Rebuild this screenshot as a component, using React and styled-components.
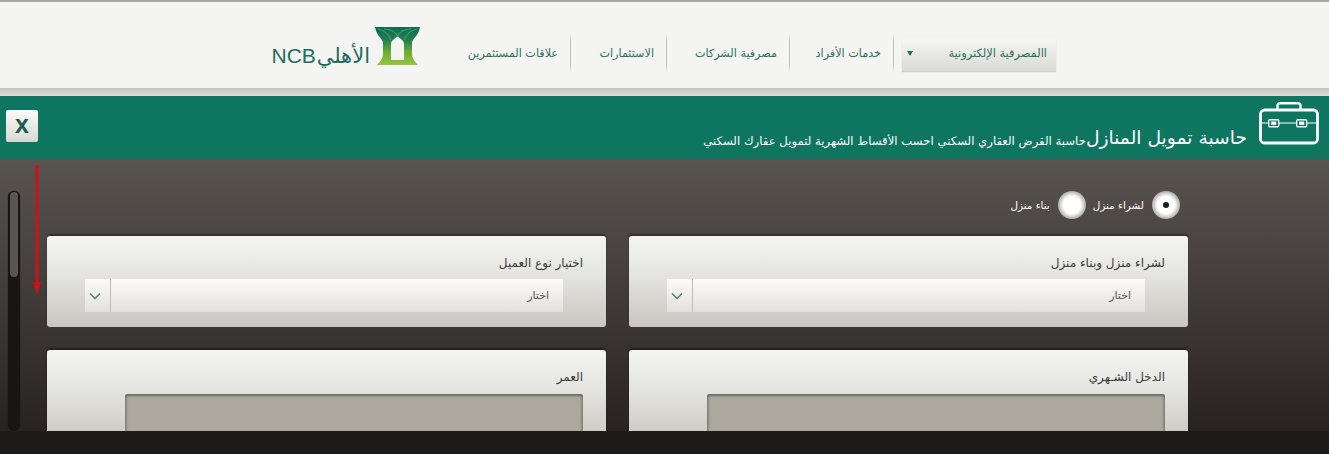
import React from "react";
import styled, { createGlobalStyle } from "styled-components";

const Global = createGlobalStyle`
	html, body {
		margin: 0;
		padding: 0;
		background: #1f1b19;
	}
	* {
		box-sizing: border-box;
	}
	body {
		font-family: "DejaVu Sans", "Liberation Sans", sans-serif;
		overflow: hidden;
	}
`

const Page = styled.div`
	width: 1329px;
	height: 454px;
	overflow: hidden;
	display: flex;
	flex-direction: column;
	background: #1f1b19;
`

const Header = styled.header`
	height: 96px;
	flex: none;
	direction: rtl;
	display: flex;
	align-items: flex-start;
	padding: 36px 273px 0 0;
	background: linear-gradient(#f4f4f3 0, #f4f4f3 86px, #c4c3bd 86px, #dfded9 94px);
	border-top: 2px solid #a5a5a3;
`

const MenuSelect = styled.div`
	width: 154px;
	height: 33px;
	flex: none;
	display: flex;
	align-items: center;
	justify-content: space-between;
	padding: 0 9px 3px 5px;
	background: linear-gradient(#f6f6f4, #d9d9d5);
	box-shadow: 0 1px 1px rgba(0, 0, 0, 0.15);
	font-size: 11.4px;
	color: #2f6f60;
	white-space: nowrap;
`

const Caret = styled.span`
	width: 0;
	height: 0;
	border-left: 3px solid transparent;
	border-right: 3px solid transparent;
	border-top: 5px solid #0e7560;
`

const NavItem = styled.a`
	height: 38px;
	width: ${(p) => p.$w}px;
	margin-top: -4px;
	margin-right: ${(p) => p.$first ? 8 : 0}px;
	flex: none;
	display: flex;
	align-items: center;
	padding-right: 12px;
	font-size: 11.2px;
	color: #2f6f60;
	white-space: nowrap;
	border-right: 1px solid;
	border-image: linear-gradient(transparent, #bdbdb9 20%, #bdbdb9 80%, transparent) 1;
`

const Logo = styled.div`
	width: 148px;
	height: 40px;
	margin-top: -12px;
	margin-right: 36px;
	flex: none;
	display: flex;
	align-items: flex-end;
	gap: 5px;
`

const LogoText = styled.span`
	font-family: "Liberation Sans", "DejaVu Sans", sans-serif;
	font-size: 21px;
	line-height: 20px;
	word-spacing: -5px;
	color: #1c6d5c;
	white-space: nowrap;
`

const Banner = styled.section`
	height: 63px;
	flex: none;
	direction: rtl;
	display: flex;
	align-items: center;
	padding: 0 10px 0 6px;
	background: #0e7560;
	color: #fff;
`

const BannerIcon = styled.svg`
	width: 60px;
	height: 44px;
	flex: none;
	margin-top: -7px;
`

const BannerTitle = styled.h1`
	margin: 20px 12px 0 0;
	font-size: 18.7px;
	line-height: 28px;
	font-weight: normal;
	white-space: nowrap;
`

const BannerSub = styled.span`
	margin-top: 26px;
	font-size: 11.7px;
	line-height: 20px;
	white-space: nowrap;
`

const CloseButton = styled.button`
	margin-right: auto;
	margin-top: -4px;
	width: 32px;
	height: 32px;
	border: none;
	border-radius: 2px;
	padding: 0 0 4px;
	background: linear-gradient(#fbfbf9, #d8d8d3);
	color: #1a5c50;
	font-family: "Liberation Sans", sans-serif;
	font-size: 25px;
	font-weight: bold;
`

const Body = styled.main`
	position: relative;
	height: 272px;
	flex: none;
	overflow: hidden;
	display: flex;
	background: linear-gradient(#5a5451, #282321);
`

const Rail = styled.div`
	width: 47px;
	flex: none;
	padding: 32px 0 0 8px;
`

const Track = styled.div`
	width: 12px;
	height: 240px;
	border-radius: 6px;
	background: #191513;
	box-shadow: 0 0 1px #111;
	padding: 1px 2px;
`

const Thumb = styled.div`
	width: 8px;
	height: 85px;
	border-radius: 4px;
	background: #595654;
`

const RedArrow = styled.svg`
	position: absolute;
	left: 31px;
	top: 6px;
	width: 12px;
	height: 132px;
`

const Content = styled.div`
	width: 1141px;
	flex: none;
	direction: rtl;
`

const RadioRow = styled.div`
	height: 77px;
	padding: 32px 8px 0 0;
	display: flex;
	align-items: flex-start;
	gap: 7px;
`

const RadioOption = styled.label`
	display: flex;
	align-items: center;
	gap: 8px;
	height: 28px;
	font-size: 10.4px;
	color: #fff;
	white-space: nowrap;
`

const RadioDot = styled.span`
	width: 28px;
	height: 28px;
	border-radius: 50%;
	background: radial-gradient(circle closest-side, #fff 62%, #aeada9 100%);
	display: flex;
	align-items: center;
	justify-content: center;
	&::after {
		content: "";
		width: 6px;
		height: 6px;
		border-radius: 50%;
		background: ${(p) => p.$checked ? "#1b1b1b" : "transparent"};
	}
`

const Panels = styled.div`
	display: grid;
	grid-template-columns: 559px 559px;
	column-gap: 23px;
	row-gap: 23px;
`

const Panel = styled.div`
	height: 91px;
	border-radius: 3px;
	padding: 19px 23px 0 0;
	background: linear-gradient(#f4f4f1, #e3e3df 45%, #c9c7c1);
	box-shadow: 0 -2px 2px rgba(0, 0, 0, 0.35);
`

const Label = styled.div`
	font-size: 12px;
	line-height: 16px;
	color: #3a3a3a;
	height: 24px;
`

const Select = styled.div`
	width: 478px;
	height: 33px;
	margin-right: 20px;
	display: flex;
	background: linear-gradient(#fcfbf9, #e1e0dc);
	font-size: 11px;
	color: #555;
`

const SelectValue = styled.div`
	flex: 1;
	display: flex;
	align-items: center;
	padding: 0 14px 0 0;
	border-left: 1px solid #bdbcb7;
`

const SelectArrow = styled.div`
	width: 25px;
	flex: none;
	display: flex;
	align-items: center;
	justify-content: center;
	padding-right: 5px;
`

const Field = styled.div`
	width: 458px;
	height: 60px;
	margin-top: 1px;
	border-radius: 3px;
	background: #aca89e;
	box-shadow: inset 0 2px 2px #6f6c64, inset 2px 0 2px #8d8a82, inset -2px 0 2px #8d8a82;
`

const Chevron = ({ color }) => (
	<svg width="12" height="8" viewBox="0 0 12 8">
		<path d="M1 1.5 L6 6.5 L11 1.5" fill="none" stroke={color} strokeWidth="1.4" />
	</svg>
);

const LogoMark = () => (
	<svg width="45" height="38" viewBox="0 0 45 38" style={{ flex: "none", marginBottom: 1 }}>
		<defs>
			<linearGradient id="arch" x1="0" y1="0" x2="0" y2="1">
				<stop offset="0" stopColor="#0c6b58" />
				<stop offset="0.35" stopColor="#1f8150" />
				<stop offset="0.65" stopColor="#6cab35" />
				<stop offset="1" stopColor="#95c53d" />
			</linearGradient>
		</defs>
		<path
			fillRule="evenodd"
			fill="url(#arch)"
			d="M0 0 H45 L44 4 C42 9 38 12 37 15 V27 C37 31 40 35 43 38 H2 C5 35 8 31 8 27 V15 C7 12 3 9 1 4 Z M16 33 H29 V17 C29 13 25 12 22.5 9 C20 12 16 13 16 17 Z"
		/>
		<path
			d="M3 2 C8 3 13 6 16 13 M42 2 C37 3 32 6 29 13 M9 2 C14 2 20 4 22.5 9 C25 4 31 2 36 2"
			fill="none"
			stroke="#3f9a66"
			strokeWidth="1.2"
		/>
	</svg>
);

const Briefcase = () => (
	<BannerIcon viewBox="0 0 60 44">
		<g fill="none" stroke="#fff">
			<rect x="1.5" y="8" width="57" height="33" rx="4" strokeWidth="2.8" />
			<path d="M18.5 8 V3.5 C18.5 2 19.5 1.2 21 1.2 H39 C40.5 1.2 41.5 2 41.5 3.5 V8" strokeWidth="2.4" />
			<path d="M2 21 H9 M20 21 H37 M48 21 H58" strokeWidth="1.2" />
			<rect x="9.7" y="17.7" width="10" height="7" rx="1" strokeWidth="1.4" />
			<rect x="37.7" y="17.7" width="10" height="7" rx="1" strokeWidth="1.4" />
		</g>
		<rect x="12.2" y="19.5" width="5" height="3.4" fill="#fff" />
		<rect x="40.2" y="19.5" width="5" height="3.4" fill="#fff" />
	</BannerIcon>
);

const FormPanel = ({ label, kind }) => (
	<Panel>
		<Label>{label}</Label>
		{kind === "select" ? (
			<Select>
				<SelectValue>اختار</SelectValue>
				<SelectArrow><Chevron color="#4f7f60" /></SelectArrow>
			</Select>
		) : (
			<Field />
		)}
	</Panel>
);

const App = () => {
	return (
		<Page>
			<Global />
			<Header>
				<MenuSelect>
					<span>االمصرفية الإلكترونية</span>
					<Caret />
				</MenuSelect>
				<NavItem $first $w={104}>خدمات الأفراد</NavItem>
				<NavItem $w={123}>مصرفية الشركات</NavItem>
				<NavItem $w={96}>الاستثمارات</NavItem>
				<NavItem $w={115}>علاقات المستثمرين</NavItem>
				<Logo>
					<LogoMark />
					<LogoText>الأهلي NCB</LogoText>
				</Logo>
			</Header>
			<Banner>
				<Briefcase />
				<BannerTitle>حاسبة تمويل المنازل</BannerTitle>
				<BannerSub>حاسبة القرض العقاري السكني احسب الأقساط الشهرية لتمويل عقارك السكني</BannerSub>
				<CloseButton>x</CloseButton>
			</Banner>
			<Body>
				<Rail>
					<Track><Thumb /></Track>
				</Rail>
				<RedArrow viewBox="0 0 12 132">
					<path d="M4.5 0 H7.5 V117 H10 L6 130 L2 117 H4.5 Z" fill="#d0101a" />
				</RedArrow>
				<Content>
					<RadioRow>
						<RadioOption><RadioDot $checked />لشراء منزل</RadioOption>
						<RadioOption><RadioDot />بناء منزل</RadioOption>
					</RadioRow>
					<Panels>
						<FormPanel label="لشراء منزل وبناء منزل" kind="select" />
						<FormPanel label="اختيار نوع العميل" kind="select" />
						<FormPanel label="الدخل الشـهري" />
						<FormPanel label="العمر" />
					</Panels>
				</Content>
			</Body>
		</Page>
	);
};

export default App;
